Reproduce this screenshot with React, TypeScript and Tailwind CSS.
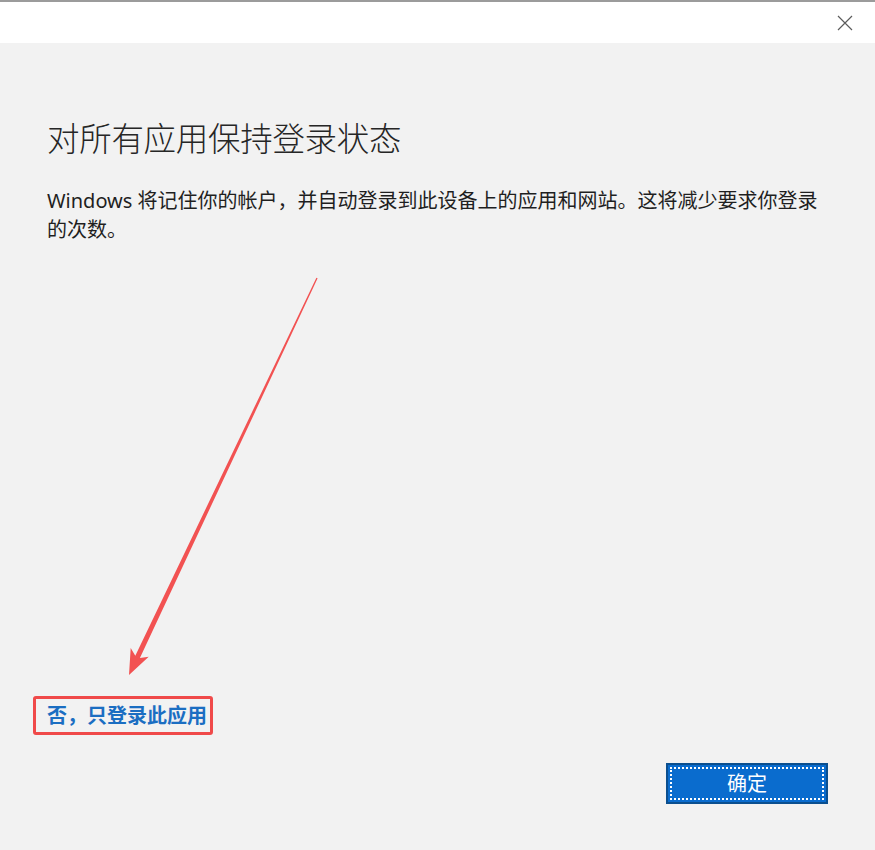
import React from "react";

export default function App() {
  const font = { fontFamily: '"Noto Sans", "Noto Sans CJK SC", sans-serif' };
  return (
    <div className="relative w-[875px] h-[850px] bg-[#f2f2f2] border-t-2 border-[#9b9b9b] flex flex-col" style={font}>
      <div className="h-[41px] bg-white flex justify-end items-center pr-[22px] shrink-0">
        <svg width="16" height="16" viewBox="0 0 16 16" className="mt-[1px]">
          <path d="M1 1 L15 15 M15 1 L1 15" stroke="#5c5c5c" strokeWidth="1.2" fill="none" />
        </svg>
      </div>
      <div className="flex-1 flex flex-col px-[47px] pt-[76px] pb-[46px]">
        <h1 className="text-[32.5px] leading-[40px] font-light text-[#262626] tracking-[-0.3px]">对所有应用保持登录状态</h1>
        <p className="mt-[27px] text-[20px] leading-[29px] text-[#1f1f1f] pr-[10px]">
          Windows 将记住你的帐户，并自动登录到此设备上的应用和网站。这将减少要求你登录的次数。
        </p>
        <div className="flex-1" />
        <div className="-ml-[14px] self-start border-[3px] border-[#f04a4a] rounded-[3px] h-[39px] w-[180px] pl-[11px] flex items-center">
          <span className="text-[20px] font-bold text-[#1b6ec2] leading-none">否，只登录此应用</span>
        </div>
        <div className="flex justify-end mt-[28px]">
          <button className="w-[162px] h-[41px] bg-[#0a6cce] border-2 border-[#0b4f8f] p-[2px]">
            <div className="w-full h-full border-2 border-dotted border-white flex items-center justify-center text-white text-[20px] leading-none">
              确定
            </div>
          </button>
        </div>
      </div>
      <svg className="absolute left-0 top-0 pointer-events-none" width="875" height="850" viewBox="0 0 875 850">
        <polygon
          points="317.6,276.3 139.9,656 148.7,654.7 129,673 130.7,646.1 135.3,653.8 316.4,275.7"
          fill="#f25252"
        />
      </svg>
    </div>
  );
}
